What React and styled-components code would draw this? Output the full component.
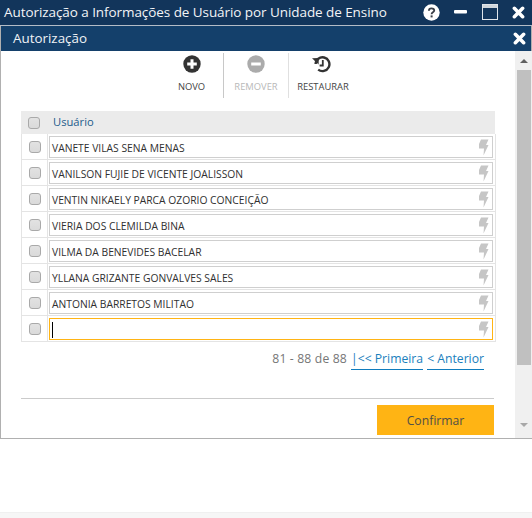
import React from "react";
import styled, { createGlobalStyle } from "styled-components";

const Global = createGlobalStyle`
  html, body { margin: 0; padding: 0; background: #fff; }
  body { font-family: "Open Sans", "Noto Sans", "Liberation Sans", sans-serif; width: 532px; height: 518px; overflow: hidden; }
  * { box-sizing: border-box; }
`;

const Page = styled.div`
  width: 532px; height: 518px; display: flex; flex-direction: column;
`;
const Win = styled.div`
  width: 532px; height: 439px; display: flex; flex-direction: column;
  border-bottom: 1px solid #b0b0b0; border-left: 1px solid #b0b0b0; border-right: 1px solid #b0b0b0;
`;
const TitleBar = styled.div`
  height: 26px; margin: 0 -1px; flex: none; background: #12355b; color: #f2f4f7; display: flex; align-items: center;
  padding: 0 0 1px 4px; font-size: 13.5px; letter-spacing: -0.07px; border-bottom: 1px solid #b4bcc6;
`;
const TitleText = styled.div`flex: 1; white-space: nowrap;`;
const TitleIcons = styled.div`display: flex; align-items: center; height: 100%;`;
const IconSlot = styled.div`width: ${p => p.$w}px; display: flex; justify-content: center; align-items: center;`;
const SubHeader = styled.div`
  height: 25px; flex: none; background: #14406b; color: #f0f3f6; display: flex; align-items: center; justify-content: space-between;
  padding: 0 5px 1px 12px; font-size: 13.4px;
`;
const Body = styled.div`flex: 1; display: flex; min-height: 0;`;
const Content = styled.div`flex: 1; padding: 2px 20px 0 20px; display: flex; flex-direction: column;`;
const ScrollBar = styled.div`
  width: 17px; background: #f0f0f0; display: flex; flex-direction: column; align-items: center; flex: none; padding-top: 8px;
`;
const ArrowUp = styled.div`width:0;height:0;border-left:4px solid transparent;border-right:4px solid transparent;border-bottom:4px solid #606060;`;
const Thumb = styled.div`width: 14px; height: 295px; background: #c0c0c0; margin-top: 7px;`;
const ArrowDown = styled.div`width:0;height:0;border-left:4px solid transparent;border-right:4px solid transparent;border-top:4px solid #a8a8a8;margin-top: 58px;`;

const Toolbar = styled.div`display: flex; justify-content: flex-start; height: 45px; padding-left: 139px;`;
const ToolBtn = styled.div`
  width: ${p => p.$w}px; display: flex; flex-direction: column; align-items: center; padding-top: 2px;
  color: ${p => p.$off ? "#b8b8b8" : "#444"};
  border-right: ${p => p.$sep ? "1px solid " + p.$sep : "none"};
`;
const ToolLabel = styled.div`font-size: 9.4px; margin-top: 7px; line-height: 13px; white-space: nowrap;`;
const RestoreIcon = styled.svg`margin-right: 3px;`;

const Table = styled.div`margin-top: 13px; width: 474px; display: flex; flex-direction: column;`;
const HeadRow = styled.div`height: 23px; background: #ebebeb; display: flex; align-items: center; width: 474px;`;
const CheckCell = styled.div`width: ${p => p.$w}px; flex: none; display: flex; justify-content: center; align-items: center;`;
const Check = styled.div`
  width: 12px; height: 12px; border-radius: 3px; background: linear-gradient(#e2e2e2, #dadada); border: 1px solid #a9a9a9;
`;
const HeadLabel = styled.div`color: #1d5c8c; font-size: 11.2px; padding-left: 6px; line-height: 20px; padding-bottom: 2px;`;
const Row = styled.div`
  height: 26px; display: flex; align-items: center; border: 1px solid #e4e4e4; border-top: none; width: 475px;
`;
const FieldCell = styled.div`flex: 1; height: 100%; border-left: 1px solid #e4e4e4; padding: 2px 2px 1px 1px; display: flex;`;
const Field = styled.div`
  flex: 1; border: 1px solid ${p => p.$focus ? "#ffb414" : "#cfcfcf"}; background: #fff; display: flex; align-items: center; justify-content: space-between;
  padding: 1px 3px 0 2px; font-size: 10.3px; color: #303030; white-space: nowrap;
`;
const Caret = styled.div`width: 1px; height: 16px; background: #000; margin-right: auto;`;

const Pager = styled.div`
  margin-top: 7px; display: flex; align-items: flex-start; justify-content: flex-end; padding-right: 11px; font-size: 12.2px; color: #767676; height: 26px; line-height: 20px; gap: 4px;
`;
const PageInfo = styled.span`letter-spacing: 0.15px;`;
const PageLink = styled.span`color: #1a80bd; border-bottom: 1px solid #0f7cbd; height: 21px; display: block;`;
const Divider = styled.div`height: 1px; background: #cbcbcb; margin-top: 23px; width: 473px;`;
const Footer = styled.div`display: flex; justify-content: flex-end; margin-top: 6px; width: 473px;`;
const Confirm = styled.div`
  width: 117px; height: 30px; background: #ffb414; color: #514f47; display: flex; align-items: center; justify-content: center; font-size: 12.2px;
`;
const Spacer = styled.div`flex: 1;`;
const BottomStrip = styled.div`height: 6px; background: #f6f6f6; border-top: 1px solid #f0f0f0;`;

const Bolt = () => (
  <svg width="11" height="17" viewBox="0 0 11 17" style={{ flex: "none" }}>
    <path d="M3 0.5 L10.5 0.5 L8 6 L10.5 6 L5.5 16.5 L6 9.5 L1 9.5 L1 5 Z" fill="#c6c6c6" />
  </svg>
);
const X = ({ s = 11 }) => (
  <svg width={s} height={s} viewBox="0 0 11 11"><path d="M2 2 L9 9 M9 2 L2 9" stroke="#fff" strokeWidth="3" strokeLinecap="round" /></svg>
);

const rows = [
  "VANETE VILAS SENA MENAS",
  "VANILSON FUJIE DE VICENTE JOALISSON",
  "VENTIN NIKAELY PARCA OZORIO CONCEIÇÃO",
  "VIERIA DOS CLEMILDA BINA",
  "VILMA DA BENEVIDES BACELAR",
  "YLLANA GRIZANTE GONVALVES SALES",
  "ANTONIA BARRETOS MILITAO",
];

export default function App() {
  return (
    <Page>
      <Global />
      <Win>
        <TitleBar>
          <TitleText>Autorização a Informações de Usuário por Unidade de Ensino</TitleText>
          <TitleIcons>
            <IconSlot $w={31}>
              <svg width="17" height="17" viewBox="0 0 17 17">
                <circle cx="8.5" cy="8.5" r="8.2" fill="#fff" />
                <path d="M5.9 6.7 C5.9 3.6 11.2 3.6 11.2 6.5 C11.2 8.4 8.6 8.3 8.6 10.3" fill="none" stroke="#3a3f48" strokeWidth="1.9" />
                <rect x="7.6" y="11.4" width="2" height="2" fill="#3a3f48" />
              </svg>
            </IconSlot>
            <IconSlot $w={27}>
              <svg width="13" height="4" viewBox="0 0 13 4"><rect width="13" height="3.5" rx="1" fill="#fff" /></svg>
            </IconSlot>
            <IconSlot $w={31}>
              <svg width="16" height="16" viewBox="0 0 16 16">
                <rect x="0.5" y="0.5" width="15" height="15" fill="none" stroke="#dfe4ea" />
                <rect x="1" y="1" width="14" height="3" fill="#cfd6dd" />
              </svg>
            </IconSlot>
            <IconSlot $w={27}><X s={13} /></IconSlot>
          </TitleIcons>
        </TitleBar>
        <SubHeader>
          <span>Autorização</span>
          <X s={13} />
        </SubHeader>
        <Body>
          <Content>
            <Toolbar>
              <ToolBtn $w={64} $sep="#c8c8c8">
                <svg width="18" height="18" viewBox="0 0 18 18">
                  <circle cx="9" cy="9" r="8.7" fill="#333" />
                  <path d="M9 4.2 V13.8 M4.2 9 H13.8" stroke="#fff" strokeWidth="3" />
                </svg>
                <ToolLabel>NOVO</ToolLabel>
              </ToolBtn>
              <ToolBtn $w={65} $off $sep="#e0e0e0">
                <svg width="18" height="18" viewBox="0 0 18 18">
                  <circle cx="9" cy="9" r="8.7" fill="#ababab" />
                  <path d="M4.2 9 H13.8" stroke="#fff" strokeWidth="3" />
                </svg>
                <ToolLabel>REMOVER</ToolLabel>
              </ToolBtn>
              <ToolBtn $w={68}>
                <RestoreIcon width="19" height="18" viewBox="0 0 19 18">
                  <path d="M3.6 9 A6.9 6.9 0 1 1 6.2 14.6" fill="none" stroke="#333" strokeWidth="2.4" />
                  <path d="M0 3.2 L6.8 3 L6.6 9.4 Z" fill="#333" />
                  <path d="M10.8 5 V10.5 H7.6" fill="none" stroke="#333" strokeWidth="1.8" />
                </RestoreIcon>
                <ToolLabel>RESTAURAR</ToolLabel>
              </ToolBtn>
            </Toolbar>
            <Table>
              <HeadRow>
                <CheckCell $w={26}><Check /></CheckCell>
                <HeadLabel>Usuário</HeadLabel>
              </HeadRow>
              {rows.map(r => (
                <Row key={r}>
                  <CheckCell $w={25}><Check /></CheckCell>
                  <FieldCell><Field><span>{r}</span><Bolt /></Field></FieldCell>
                </Row>
              ))}
              <Row>
                <CheckCell $w={25}><Check /></CheckCell>
                <FieldCell><Field $focus><Caret /><Bolt /></Field></FieldCell>
              </Row>
            </Table>
            <Pager>
              <PageInfo>81 - 88 de 88</PageInfo>
              <PageLink>|&lt;&lt; Primeira</PageLink>
              <PageLink>&lt; Anterior</PageLink>
            </Pager>
            <Divider />
            <Footer><Confirm>Confirmar</Confirm></Footer>
          </Content>
          <ScrollBar>
            <ArrowUp />
            <Thumb />
            <ArrowDown />
          </ScrollBar>
        </Body>
      </Win>
      <Spacer />
      <BottomStrip />
    </Page>
  );
}
